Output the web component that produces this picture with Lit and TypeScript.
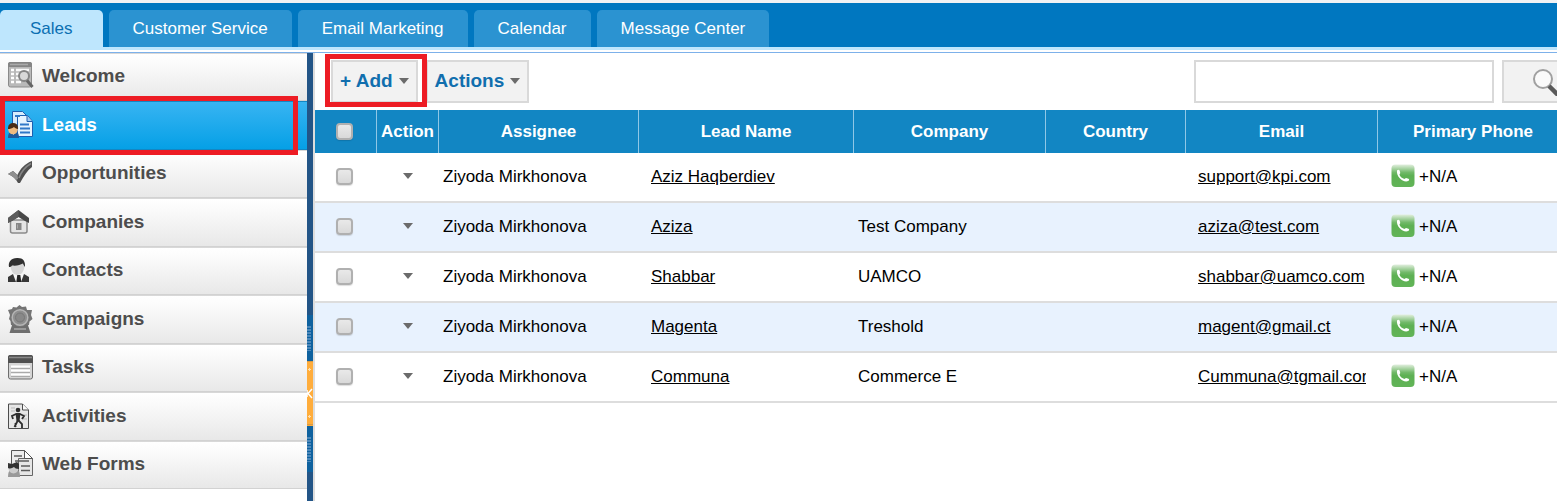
import { LitElement, html, css, svg, nothing } from "lit";
import { customElement, property } from "lit/decorators.js";
import { classMap } from "lit/directives/class-map.js";

interface Lead {
  assignee: string;
  name: string;
  company: string;
  country: string;
  email: string;
  phone: string;
}

const TABS = ["Sales", "Customer Service", "Email Marketing", "Calendar", "Message Center"];

const LEADS: Lead[] = [
  { assignee: "Ziyoda Mirkhonova", name: "Aziz Haqberdiev", company: "", country: "", email: "support@kpi.com", phone: "+N/A" },
  { assignee: "Ziyoda Mirkhonova", name: "Aziza", company: "Test Company", country: "", email: "aziza@test.com", phone: "+N/A" },
  { assignee: "Ziyoda Mirkhonova", name: "Shabbar", company: "UAMCO", country: "", email: "shabbar@uamco.com", phone: "+N/A" },
  { assignee: "Ziyoda Mirkhonova", name: "Magenta", company: "Treshold", country: "", email: "magent@gmail.ct", phone: "+N/A" },
  { assignee: "Ziyoda Mirkhonova", name: "Communa", company: "Commerce E", country: "", email: "Cummuna@tgmail.com", phone: "+N/A" },
];

const ICONS: Record<string, unknown> = {
  Welcome: svg`
    <rect x="0.5" y="0.5" width="23" height="24.500" rx="2" fill="#b9b9b9" stroke="#8a8a8a"/>
    <path d="M0 2a2 2 0 0 1 2-2h20a2 2 0 0 1 2 2v3H0z" fill="#858585"/>
    <path d="M2 2.500h18" stroke="#aaa" stroke-width="1.500"/>
    <path d="M3 8h3M3 12h3M3 16h3M3 20h3" stroke="#fff" stroke-width="2.600"/>
    <path d="M8 8h13M8 12h4M8 16h3M8 20h5" stroke="#fafafa" stroke-width="2.600"/>
    <circle cx="16" cy="14" r="5" fill="#d8d8d8" stroke="#858585" stroke-width="2"/>
    <path d="M19 18.500l5.500 6.500" stroke="#666" stroke-width="3"/>`,
  Leads: svg`
    <path d="M4.500 0.500h10l4 4V24h-14z" fill="#d7ecfc" stroke="#1d5fb0"/>
    <path d="M9.500 4.500h10l5 6V25.500h-15z" fill="#e6f4ff" stroke="#1d5fb0"/>
    <path d="M19 5v5.500h5.500" fill="#9fc8ee" stroke="#1d5fb0"/>
    <path d="M7 5h5M12 13.500h9M12 17.500h10M12 21.500h10" stroke="#2f78c8" stroke-width="2"/>
    <path d="M0 27c0-5 2-7 5.500-7s5.500 2 5.500 7z" fill="#1e5a9c"/>
    <path d="M3.500 20l2 4 2-4z" fill="#fff"/>
    <circle cx="5" cy="18.500" r="4.800" fill="#f0bc80"/>
    <path d="M0 18c-.3-4 2-6 5-6 3.500 0 5.500 2 5 6-2-.3-3-1-4-2-2 1.600-4 2-6 2z" fill="#4a2d16"/>`,
  Opportunities: svg`
    <path d="M0 15l5-3 4.500 4C12 10 17 4.500 24 2v6c-5 3.500-8 9-12 16h-2C8 20 5 17 0 15z" fill="#505050"/>
    <path d="M0 15l5-3 4.500 4 .5 4-2 1C5.500 18 3.500 16.500 0 15z" fill="#8f8f8f"/>
    <path d="M11 19c2-6 6-11 12-14.500" stroke="#858585" stroke-width="1.500" fill="none"/>`,
  Companies: svg`
    <path d="M2.500 12h16.500V23a2 2 0 0 1-2 2H4.500a2 2 0 0 1-2-2z" fill="#e4e4e4" stroke="#8a8a8a" stroke-width="1.500"/>
    <path d="M0 10L10.500 2 21 10v5L17 13 10.500 9 4 13 0 15z" fill="#484848"/>
    <path d="M0 10L10.500 2v7L0 15z" fill="#5c5c5c"/>
    <rect x="8" y="15" width="5.500" height="7" fill="#858585"/>
    <path d="M9.500 16.500v4" stroke="#aaa"/>`,
  Contacts: svg`
    <path d="M0 26v-5l5-3h11l5 3v5z" fill="#373737"/>
    <path d="M5 18l3 8h5l3-8z" fill="#f6f6f6"/>
    <path d="M9.300 19h3l1 7h-5z" fill="#222"/>
    <path d="M2.500 9c0-4 3-6 7-6s7 2 7 6c0 6-3 10-7 10S2.500 15 2.500 9z" fill="#d6d6d6"/>
    <path d="M1 11C0 6 3 2 9 2c6-.3 8.500 3 8 9-1-1.500-1.500-2-2-3.500-3 1.500-6 2.500-11 2-.5 1-2 1.500-3 1.500z" fill="#303030"/>`,
  Campaigns: svg`
    <path d="M5 17L1.500 28h21L19 17z" fill="#6e6e6e"/>
    <path d="M11.500 0l2.500 2 4-.5 1 3.500 5 0-1 5 1.500 4-3 2.500-.5 3.500-4 .5-5 2-5-2-4-.5-.5-4L1 14l1-4-2-5 4-1L5 2l3.500.5z" fill="#757575"/>
    <circle cx="12" cy="12.500" r="7.800" fill="#8f8f8f" stroke="#b5b5b5" stroke-width="1.500"/>
    <circle cx="12" cy="12.500" r="4.500" fill="#888" stroke="#777"/>
    <path d="M6 24h12" stroke="#aaa" stroke-width="1.500"/>`,
  Tasks: svg`
    <rect x="0.500" y="2.500" width="24" height="23.500" rx="2" fill="#d5d5d5" stroke="#6d6d6d"/>
    <path d="M0 4a2 2 0 0 1 2-2h21a2 2 0 0 1 2 2v6H0z" fill="#515151"/>
    <path d="M1 4.500h23" stroke="#888" stroke-width="1.500"/>
    <path d="M3 13.500h19M3 17.500h19M3 21.500h19" stroke="#fff" stroke-width="2"/>
    <path d="M3 15.500h19M3 19.500h19M3 23.500h19" stroke="#aaa"/>`,
  Activities: svg`
    <path d="M0.500 2h14l6 6v18.500h-20z" fill="#e6e6e6" stroke="#4c4c4c"/>
    <path d="M14.500 2v6h6" fill="#fafafa" stroke="#4c4c4c"/>
    <path d="M3 6h4M3 9h4M15 13h4M15 17h4" stroke="#bbb"/>
    <circle cx="10" cy="8" r="2.300" fill="#2d2d2d"/>
    <path d="M12 12l4 2-2 3M8 12l-4 2 1 3M7.500 25v-4M10 18l4 4v4M9.500 19l-3 6" fill="none" stroke="#2d2d2d" stroke-width="1.800"/>
    <path d="M7.500 11h5l-1 8h-3z" fill="#2d2d2d"/>`,
  "Web Forms": svg`
    <path d="M3.500 0.500h13l5 5V18h-18z" fill="#ededed" stroke="#555"/>
    <path d="M10.500 8.500h14v17h-14z" fill="#e6e6e6" stroke="#666"/>
    <path d="M16.500 0.500v8h8z" fill="#fff" stroke="#555"/>
    <path d="M6 6h8M7 11h14M13 16h9M13 20.500h9" stroke="#5c5c5c" stroke-width="1.500"/>
    <path d="M0 27c0-6 2-8 6-8s6 2 6 8z" fill="#999"/>
    <circle cx="5.500" cy="18.500" r="5" fill="#ccc"/>
    <path d="M0 18v-5l4 1 5-2 2 2v5c-3 0-4-1-5-2-2 1.500-4 2-6 1z" fill="#333"/>`,
};

@customElement("module-tabs")
class ModuleTabs extends LitElement {
  @property() active = "Sales";

  static styles = css`
    :host { display: block; border-top: 3px solid #f0f2f4; border-bottom: 1px solid #7db1ea; }
    .bar {
      display: flex;
      gap: 6px;
      padding-top: 7px;
      background: #0077c0;
      border-bottom: 3px solid #bee6fd;
      margin-bottom: 2px;
    }
    .tab {
      flex: none;
      height: 37px;
      padding: 0 24px;
      border: 0;
      border-radius: 5px 5px 0 0;
      background: #2b93d1;
      color: #fff;
      font: 17px/37px "Liberation Sans", Arial, sans-serif;
    }
    .active { padding: 0 30px; background: #bee6fd; color: #0a6fb2; }
  `;

  render() {
    return html`<nav class="bar">
      ${TABS.map((t) => html`<button class=${classMap({ tab: true, active: t === this.active })}>${t}</button>`)}
    </nav>`;
  }
}

@customElement("side-menu")
class SideMenu extends LitElement {
  @property() active = "Leads";

  static styles = css`
    :host { display: block; }
    .list { list-style: none; margin: 0; padding: 0; }
    .item { height: 48px; display: flex; position: relative; }
    .item:nth-child(even) { height: 49px; }
    .link {
      box-sizing: border-box;
      flex: 1;
      display: flex;
      align-items: center;
      gap: 8px;
      padding: 0 8px 2px;
      border-top: 1px solid #d8d8d8;
      border-bottom: 1px solid #d2d2d2;
      background: linear-gradient(#fff, #fbfbfb 20%, #e8e8e8);
      color: #4d4d4d;
      font: bold 19px/24px "Liberation Sans", Arial, sans-serif;
      text-decoration: none;
    }
    .icon { flex: none; width: 26px; height: 28px; }
    .active .link {
      background: linear-gradient(#38b4f2, #05a0e6);
      border-color: #1287c4;
      color: #fff;
    }
    .active::after {
      content: "";
      position: absolute;
      inset: -5px 9px -5px 0;
      border: 5px solid #ed1c24;
      z-index: 1;
    }
  `;

  render() {
    return html`<ul class="list">
      ${Object.keys(ICONS).map(
        (label) => html`<li class=${classMap({ item: true, active: label === this.active })}>
          <a class="link" href="#">
            <svg class="icon" viewBox="0 0 26 28" aria-hidden="true">${ICONS[label]}</svg>${label}
          </a>
        </li>`
      )}
    </ul>`;
  }
}

@customElement("pane-splitter")
class PaneSplitter extends LitElement {
  static styles = css`
    :host { display: flex; flex-direction: column; width: 6px; padding-top: 262px; background: #235587; box-sizing: border-box; }
    .end { height: 46px; background: #0f629f; display: flex; align-items: center; }
    .grip { width: 4px; height: 25px; background: repeating-linear-gradient(#4d88ba 0 2px, #0f629f 2px 3px); }
    .toggle { flex: none; height: 65px; width: 6px; padding: 0; border: 0; background: #ffad3c; display: block; }
    .mark { display: block; width: 6px; height: 65px; }
  `;

  render() {
    return html`
      <div class="end"><div class="grip"></div></div>
      <button class="toggle" aria-label="Collapse menu">
        <svg class="mark" viewBox="0 0 6 65">
          <path d="M0 0.500h6M0 63.500h6" stroke="#d99a45"/>
          <path d="M1 8.500h3M2.500 7v3M1 55.500h3M2.500 54v3" stroke="#ffe0b0"/>
          <path d="M5 28L1 32.500 5 37M0 29v7" fill="none" stroke="#fff" stroke-width="1.500"/>
        </svg>
      </button>
      <div class="end"><div class="grip"></div></div>`;
  }
}

@customElement("leads-panel")
class LeadsPanel extends LitElement {
  static styles = css`
    :host { display: block; overflow: hidden; border-left: 2px solid #ddd; font: 17px/20px "Liberation Sans", Arial, sans-serif; color: #000; }
    .inner { min-width: 1275px; }
    .toolbar { display: flex; align-items: center; gap: 8px; height: 43px; padding: 7px 0 7px 16px; }
    .marked { position: relative; display: flex; }
    .marked::after { content: ""; position: absolute; inset: -6px -9px -4px -6px; border: 5px solid #ed1c24; pointer-events: none; }
    .btn {
      box-sizing: border-box;
      display: flex;
      align-items: center;
      gap: 6px;
      height: 43px;
      padding: 0 7px 2px 7px;
      border: 2px solid #d9d9d9;
      background: #f2f2f2;
      color: #116fae;
      font: bold 19px/24px "Liberation Sans", Arial, sans-serif;
    }
    .caret { width: 10px; height: 6px; fill: #6b6b6b; display: block; }
    .search { display: flex; gap: 8px; margin-left: auto; }
    .field { box-sizing: border-box; width: 300px; height: 43px; margin: 0; border: 2px solid #d9d9d9; border-radius: 0; background: #fff; font: inherit; padding: 0 8px; }
    .go { width: 88px; justify-content: center; padding: 0; }
    .lens { width: 28px; height: 28px; }
    .wrap { padding-right: 22px; }
    .table { width: 100%; table-layout: fixed; border-collapse: separate; border-spacing: 0; }
    .narrow { width: 62px; }
    .w200 { width: 200px; }
    .w215 { width: 215px; }
    .w192 { width: 192px; }
    .w140 { width: 140px; }
    .head { height: 43px; padding: 0; background: #1286c3; color: #fff; border-right: 1px solid #8fc7e6; font-weight: bold; text-align: center; box-sizing: border-box; }
    .head:last-child { border-right: 0; }
    .cell { height: 46px; padding: 0 4px 2px; border-bottom: 2px solid #ddd; }
    .row:nth-child(even) .cell { background: #e8f2fe; }
    .cell.linked { padding: 0 12px 2px; }
    .cell, .head { vertical-align: middle; }
    .text { display: block; padding-top: 2px; }
    .clip { overflow: hidden; white-space: nowrap; line-height: 24px; }
    .ref { color: #000; text-decoration: underline; }
    .menu { display: block; margin: 0 auto; border: 0; background: none; padding: 0; }
    .check {
      appearance: none;
      display: block;
      box-sizing: border-box;
      width: 17px;
      height: 17px;
      margin: 0 auto;
      border: 2px solid #b0b0b0;
      border-radius: 4px;
      background: linear-gradient(#e9e9e9, #d9d9d9);
      box-shadow: 0 1px 1px #0002;
    }
    .pick { padding-right: 3px; }
    .phone { display: flex; align-items: center; gap: 4px; padding-left: 9px; }
    .call { width: 24px; height: 24px; }
  `;

  caret() {
    return html`<svg class="caret" viewBox="0 0 10 6" aria-hidden="true"><path d="M0 0h10L5 6z"/></svg>`;
  }

  row(l: Lead) {
    return html`<tr class="row">
      <td class="cell"><div class="pick"><input class="check" type="checkbox" aria-label=${`Select ${l.name}`} /></div></td>
      <td class="cell"><button class="menu" aria-label=${`Actions for ${l.name}`}>${this.caret()}</button></td>
      <td class="cell"><span class="text">${l.assignee}</span></td>
      <td class="cell linked"><span class="text"><a class="ref" href="#">${l.name}</a></span></td>
      <td class="cell"><span class="text">${l.company || nothing}</span></td>
      <td class="cell"><span class="text">${l.country || nothing}</span></td>
      <td class="cell linked"><span class="text clip"><a class="ref" href=${`mailto:${l.email}`}>${l.email}</a></span></td>
      <td class="cell">
        <div class="phone">
          <svg class="call" viewBox="0 0 24 24" aria-hidden="true">
            <defs><linearGradient id="g" x2="0" y2="1"><stop offset="0" stop-color="#e2efdf"/><stop offset=".35" stop-color="#72b969"/><stop offset=".5" stop-color="#5db052"/><stop offset="1" stop-color="#62b458"/></linearGradient></defs>
            <rect x="0.500" y="0.500" width="23" height="22.500" rx="4" fill="url(#g)"/>
            <path d="M6 6.500c.8-1 2-1 2.600 0l.7 2.500-.9 1.800c1 2 2.700 3.600 5 4.200l1.600-1 2.500.8c1 .8.800 1.700-.3 2.200C12.500 19 5 13 6 6.500z" fill="#fff"/>
          </svg>
          <span class="text">${l.phone}</span>
        </div>
      </td>
    </tr>`;
  }

  render() {
    return html`<div class="inner">
      <div class="toolbar">
        <span class="marked"><button class="btn">+ Add ${this.caret()}</button></span>
        <button class="btn">Actions ${this.caret()}</button>
        <form class="search">
          <input class="field" type="text" aria-label="Search leads" />
          <button class="btn go" type="button" aria-label="Search">
            <svg class="lens" viewBox="0 0 28 28">
              <circle cx="11" cy="11" r="9" fill="#fafafa" stroke="#a0a0a0" stroke-width="2"/>
              <path d="M17 18l9 9" stroke="#5a5a5a" stroke-width="4.500"/>
            </svg>
          </button>
        </form>
      </div>
      <div class="wrap">
        <table class="table">
          <colgroup>
            <col class="narrow" /><col class="narrow" /><col class="w200" /><col class="w215" />
            <col class="w192" /><col class="w140" /><col class="w192" /><col />
          </colgroup>
          <thead>
            <tr>
              <th class="head"><div class="pick"><input class="check" type="checkbox" aria-label="Select all" /></div></th>
              ${["Action", "Assignee", "Lead Name", "Company", "Country", "Email", "Primary Phone"].map(
                (h) => html`<th class="head" scope="col">${h}</th>`
              )}
            </tr>
          </thead>
          <tbody>${LEADS.map((l) => this.row(l))}</tbody>
        </table>
      </div>
    </div>`;
  }
}

@customElement("app-root")
class AppRoot extends LitElement {
  static styles = css`
    :host { display: flex; flex-direction: column; min-height: 100vh; background: #fff; }
    .body { flex: 1; display: grid; grid-template-columns: 307px 6px minmax(0, 1fr); }
  `;

  render() {
    return html`
      <module-tabs></module-tabs>
      <div class="body">
        <side-menu></side-menu>
        <pane-splitter></pane-splitter>
        <leads-panel></leads-panel>
      </div>`;
  }
}
